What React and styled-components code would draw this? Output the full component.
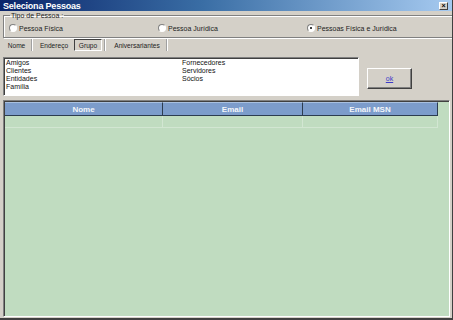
import React from "react";
import styled, { createGlobalStyle } from "styled-components";

const GlobalStyle = createGlobalStyle`
  html, body { margin: 0; padding: 0; background: #d4d0c8; }
  body { font-family: "Liberation Sans", Arial, sans-serif; font-size: 7px; color: #000; }
`;

const Window = styled.div`
  width: 453px;
  height: 320px;
  box-sizing: border-box;
  display: flex;
  flex-direction: column;
  background: #d4d0c8;
  border-right: 1px solid #404040;
  border-bottom: 2px solid #404040;
  overflow: hidden;
`;

const TitleBar = styled.div`
  height: 11px;
  flex: none;
  display: flex;
  align-items: center;
  justify-content: space-between;
  padding: 0 4px 0 3px;
  background: linear-gradient(90deg, #0a246a 0%, #3a6ea5 45%, #a6caf0 100%);
  color: #fff;
  font-weight: bold;
  font-size: 9px;
  letter-spacing: -0.2px;
`;

const CloseButton = styled.div`
  width: 9px;
  height: 8px;
  box-sizing: border-box;
  background: #d4d0c8;
  border: 1px solid;
  border-color: #fff #404040 #404040 #fff;
  display: flex;
  align-items: center;
  justify-content: center;
  color: #000;
  font-size: 7px;
  line-height: 1;
  font-weight: bold;
`;

const Body = styled.div`
  flex: 1;
  display: flex;
  flex-direction: column;
  padding: 0 2px 1px 3px;
  min-height: 0;
`;

const GroupBox = styled.fieldset`
  margin: 1px 0 0 0;
  padding: 5px 5px 0 5px;
  border: 1px solid #808080;
  box-shadow: 1px 1px 0 #fff, inset 1px 1px 0 #fff;
  display: grid;
  grid-template-columns: repeat(3, 149px);
  align-items: start;
  height: 26px;
  box-sizing: border-box;
`;

const Legend = styled.legend`
  padding: 0 1px;
  margin-left: 1px;
  font-size: 7px;
  color: #222;
`;

const RadioOption = styled.label`
  display: flex;
  align-items: center;
  gap: 2px;
  white-space: nowrap;
  color: #222;
`;

const RadioCircle = styled.span`
  width: 8px;
  height: 8px;
  box-sizing: border-box;
  border-radius: 50%;
  border: 1px solid;
  border-color: #808080 #fff #fff #808080;
  background: #fff;
  display: flex;
  align-items: center;
  justify-content: center;
  &::after {
    content: "";
    width: 2px;
    height: 2px;
    border-radius: 50%;
    background: ${p => (p.$checked ? "#000" : "transparent")};
  }
`;

const Tabs = styled.div`
  display: flex;
  align-items: center;
  height: 14px;
  font-size: 6.6px;
`;

const Tab = styled.div`
  width: ${p => p.$w}px;
  height: 12px;
  display: flex;
  align-items: center;
  justify-content: center;
  box-sizing: border-box;
  border: 1px solid;
  border-color: ${p => (p.$active ? "#404040 #fff #fff #404040" : "transparent")};
  color: #222;
`;

const TabSeparator = styled.span`
  width: 0;
  height: 12px;
  border-left: 1px solid #a0a0a0;
  border-right: 1px solid #fff;
  margin: 0 ${p => p.$gap}px;
`;

const ListRow = styled.div`
  display: flex;
  align-items: center;
  margin-top: 5px;
  height: 39px;
`;

const ListBox = styled.div`
  width: 356px;
  height: 39px;
  box-sizing: border-box;
  background: #fff;
  border: 1px solid;
  border-color: #808080 #fff #fff #808080;
  box-shadow: inset 1px 1px 0 #404040;
  padding: 1px 0 0 2px;
  display: grid;
  grid-template-columns: 176px 1fr;
  grid-auto-flow: column;
  grid-template-rows: repeat(4, 8px);
  line-height: 8px;
`;

const ListItem = styled.div`
  white-space: nowrap;
  color: #111;
`;

const OkButton = styled.button`
  margin: 3px 0 0 8px;
  width: 45px;
  height: 21px;
  background: #d4d0c8;
  border: 1px solid;
  border-color: #fff #404040 #404040 #fff;
  box-shadow: inset -1px -1px 0 #808080;
  font-family: inherit;
  font-size: 7px;
  color: #3c3cc8;
  text-decoration: underline;
  padding: 0;
`;

const Grid = styled.div`
  margin-top: 4px;
  flex: 1;
  background: #c0dcc0;
  border: 1px solid;
  border-color: #808080 #fff #fff #808080;
  box-shadow: inset 1px 1px 0 #404040;
  padding: 1px 0 0 1px;
`;

const GridRow = styled.div`
  display: grid;
  grid-template-columns: 158px 140px 135px;
`;

const HeaderCell = styled.div`
  height: 14px;
  box-sizing: border-box;
  background: #7c9ccb;
  border-top: 1px solid #a8c0e0;
  border-right: 1px solid #2c3c50;
  border-bottom: 1px solid #2c3c50;
  color: #f4f6fa;
  font-weight: bold;
  font-size: 8px;
  display: flex;
  align-items: center;
  justify-content: center;
`;

const DataCell = styled.div`
  height: 12px;
  box-sizing: border-box;
  border-right: 1px solid #d2e6d2;
  border-bottom: 1px solid #d2e6d2;
`;

const radios = [
  { label: "Pessoa Física" },
  { label: "Pessoa Jurídica" },
  { label: "Pessoas Física e Jurídica", checked: true },
];

const grupos = ["Amigos", "Clientes", "Entidades", "Família", "Fornecedores", "Servidores", "Sócios"];
const columns = ["Nome", "Email", "Email MSN"];

export default function App() {
  return (
    <>
      <GlobalStyle />
      <Window>
        <TitleBar>
          <span>Seleciona Pessoas</span>
          <CloseButton>×</CloseButton>
        </TitleBar>
        <Body>
          <GroupBox>
            <Legend>Tipo de Pessoa :</Legend>
            {radios.map(r => (
              <RadioOption key={r.label}>
                <RadioCircle $checked={r.checked} />
                {r.label}
              </RadioOption>
            ))}
          </GroupBox>
          <Tabs>
            <Tab $w={27}>Nome</Tab>
            <TabSeparator $gap={1} />
            <Tab $w={40}>Endereço</Tab>
            <Tab $w={28} $active>Grupo</Tab>
            <TabSeparator $gap={2} />
            <Tab $w={58}>Aniversariantes</Tab>
            <TabSeparator $gap={0} />
          </Tabs>
          <ListRow>
            <ListBox>
              {grupos.map(g => <ListItem key={g}>{g}</ListItem>)}
            </ListBox>
            <OkButton>ok</OkButton>
          </ListRow>
          <Grid>
            <GridRow>
              {columns.map(c => <HeaderCell key={c}>{c}</HeaderCell>)}
            </GridRow>
            <GridRow>
              {columns.map(c => <DataCell key={c} />)}
            </GridRow>
          </Grid>
        </Body>
      </Window>
    </>
  );
}
